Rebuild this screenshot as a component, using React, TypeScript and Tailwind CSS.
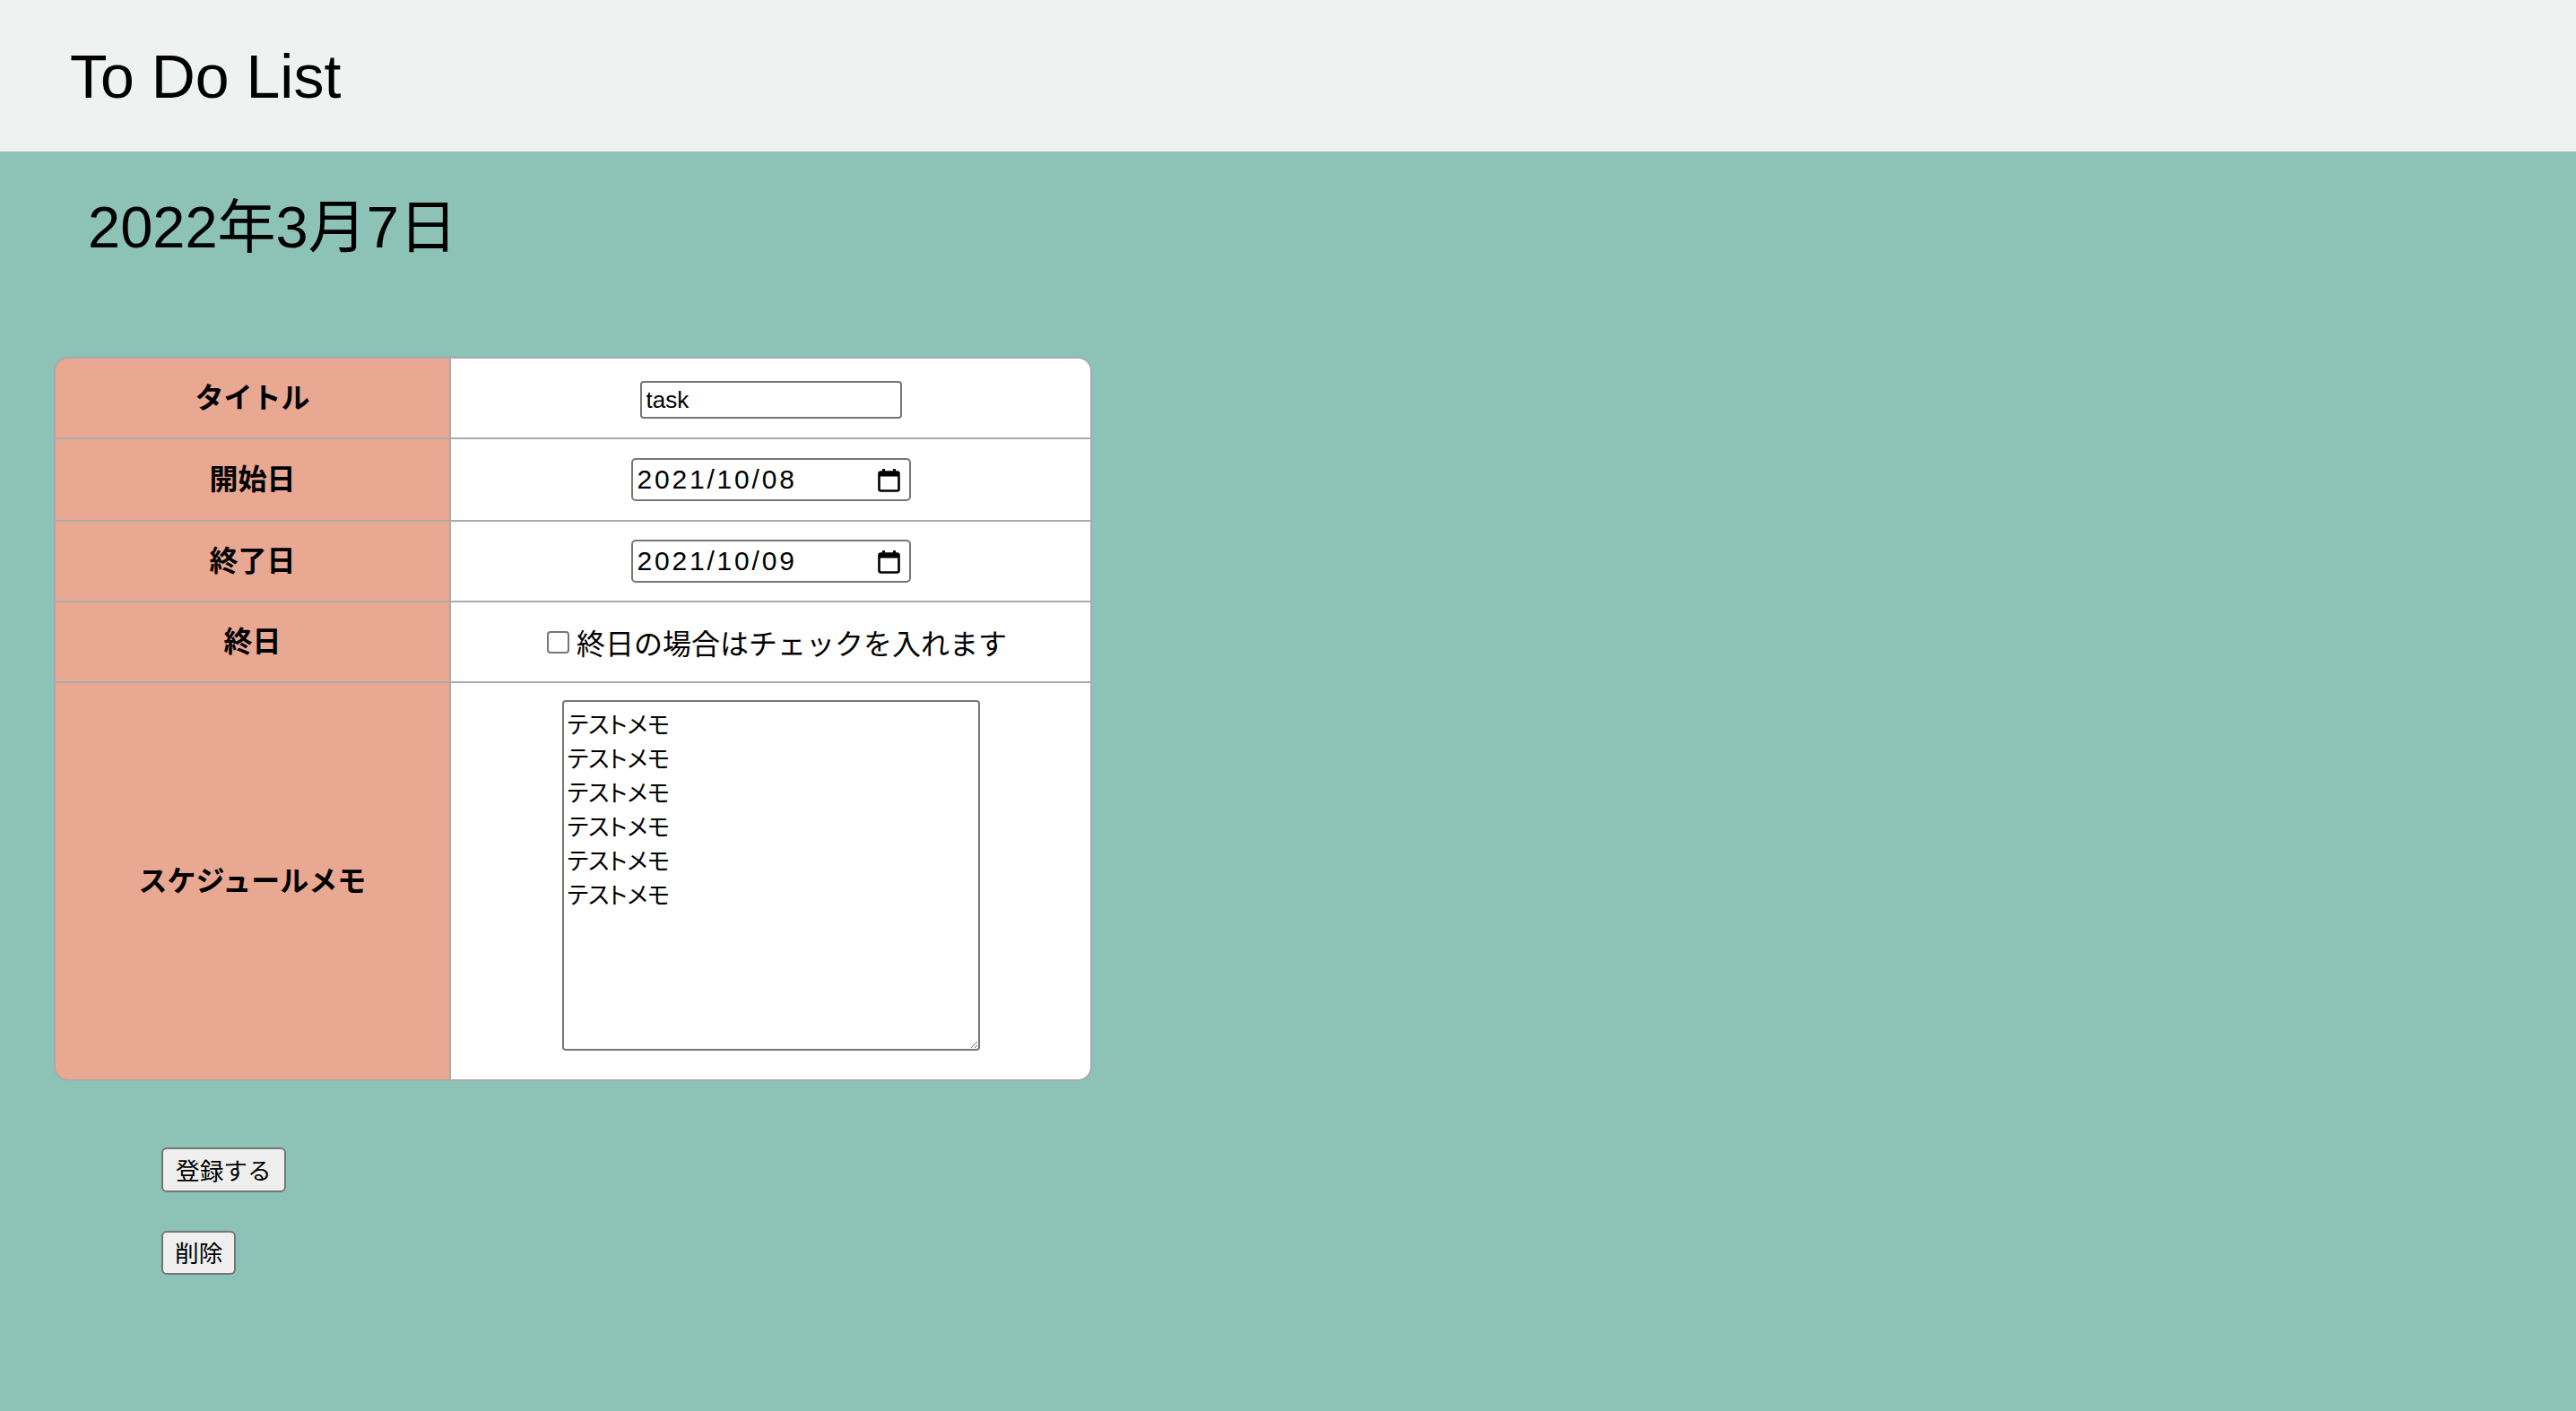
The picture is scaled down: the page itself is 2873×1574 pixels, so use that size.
import React from "react";

function CalendarIcon() {
  return (
    <svg width="25" height="27" viewBox="0 0 25 27" fill="none">
      <rect x="1.5" y="4.5" width="22" height="21" rx="2" stroke="#000" strokeWidth="2.6" />
      <rect x="1.5" y="4.5" width="22" height="5" fill="#000" />
      <rect x="5" y="1" width="3" height="5" rx="0.8" fill="#000" />
      <rect x="17" y="1" width="3" height="5" rx="0.8" fill="#000" />
    </svg>
  );
}

function DateField({ value }: { value: string }) {
  return (
    <div className="w-[312px] h-[48px] border-2 border-[#767676] rounded-[5px] bg-white flex items-center justify-between pl-[5px] pr-[10px]">
      <span className="text-[30px] tracking-[2.8px] text-black font-['Liberation_Sans',sans-serif] leading-none">
        {value}
      </span>
      <CalendarIcon />
    </div>
  );
}

function Row({
  label,
  height,
  last,
  children,
  align = "center",
}: {
  label: string;
  height: string;
  last?: boolean;
  children: React.ReactNode;
  align?: "center" | "start";
}) {
  return (
    <div className={`flex ${height} ${last ? "" : "border-b-2 border-[#aaaaaa]"}`}>
      <div className="w-[441px] shrink-0 bg-[#e8a891] border-r-2 border-[#aaaaaa] flex items-center justify-center">
        <span className="text-[32px] font-bold text-black leading-none">{label}</span>
      </div>
      <div
        className={`flex-1 bg-white flex justify-center ${
          align === "center" ? "items-center" : "items-start"
        }`}
      >
        {children}
      </div>
    </div>
  );
}

export default function App() {
  return (
    <div className="min-h-screen flex flex-col font-['Liberation_Sans','Noto_Sans_CJK_JP',sans-serif] text-black">
      <header className="h-[169px] shrink-0 bg-[#f0f2f1] flex items-center pl-[78px]">
        <h1 className="text-[68px] leading-none font-normal">To Do List</h1>
      </header>
      <main className="flex-1 bg-[#8cc3b6] pl-[60px]">
        <h2 className="mt-[49px] ml-[38px] text-[65px] leading-[72px] font-normal">2022年3月7日</h2>
        <div className="mt-[108px] w-[1158px] border-2 border-[#aaaaaa] rounded-[16px] overflow-hidden">
          <Row label="タイトル" height="h-[90px]">
            <input
              defaultValue="task"
              className="w-[292px] h-[42px] mt-[4px] border-2 border-[#767676] rounded-[4px] bg-white px-[5px] text-[26px] text-black font-['Liberation_Sans',sans-serif] outline-none"
            />
          </Row>
          <Row label="開始日" height="h-[92px]">
            <DateField value="2021/10/08" />
          </Row>
          <Row label="終了日" height="h-[90px]">
            <DateField value="2021/10/09" />
          </Row>
          <Row label="終日" height="h-[90px]">
            <label className="flex items-center gap-[8px] ml-[14px]">
              <span className="w-[25px] h-[25px] border-2 border-[#767676] rounded-[4px] bg-white inline-block" />
              <span className="text-[32px] leading-none font-['Noto_Sans_CJK_JP',sans-serif]">
                終日の場合はチェックを入れます
              </span>
            </label>
          </Row>
          <Row label="スケジュールメモ" height="h-[442px]" last align="start">
            <textarea
              defaultValue={"テストメモ\nテストメモ\nテストメモ\nテストメモ\nテストメモ\nテストメモ"}
              className="mt-[19px] w-[466px] h-[391px] border-2 border-[#767676] rounded-[4px] bg-white px-[4px] py-[5px] text-[26px] leading-[38px] text-black font-['Noto_Sans_CJK_JP',sans-serif] [font-feature-settings:'palt'] resize outline-none"
            />
          </Row>
        </div>
        <div className="ml-[120px] mt-[74px] flex flex-col items-start gap-[43px] pb-[100px]">
          <button className="h-[50px] px-[14px] bg-[#efefef] border-2 border-[#767676] rounded-[6px] text-[26.7px] leading-none font-['Noto_Sans_CJK_JP',sans-serif]">
            登録する
          </button>
          <button className="h-[49px] px-[13px] bg-[#efefef] border-2 border-[#767676] rounded-[6px] text-[26.7px] leading-none font-['Noto_Sans_CJK_JP',sans-serif]">
            削除
          </button>
        </div>
      </main>
    </div>
  );
}
